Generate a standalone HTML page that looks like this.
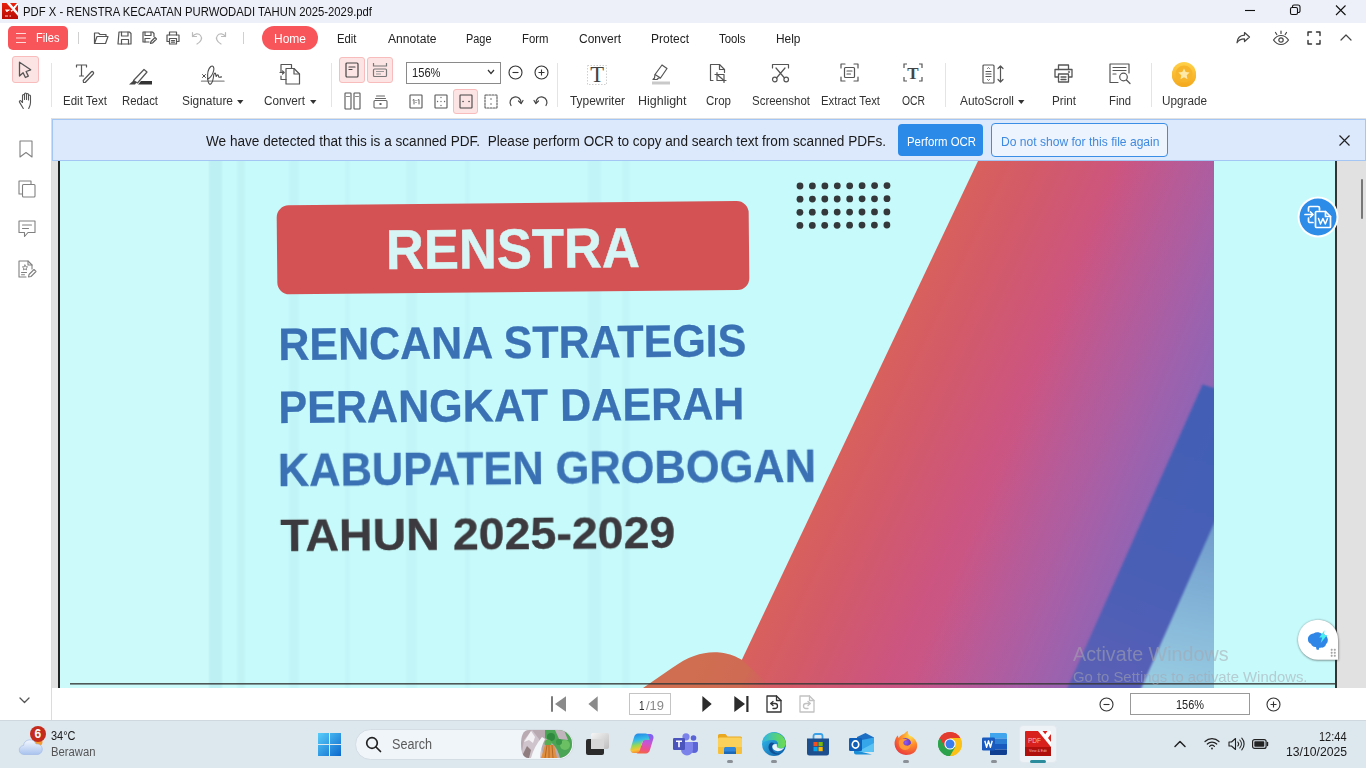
<!DOCTYPE html>
<html lang="en"><head>
<meta charset="utf-8">
<title>PDF X - RENSTRA KECAATAN PURWODADI TAHUN 2025-2029.pdf</title>
<style>
*{box-sizing:border-box;margin:0;padding:0}
html,body{width:1366px;height:768px;overflow:hidden;background:#fff}
body{font-family:"Liberation Sans",sans-serif;font-size:12px;color:#222;position:relative}
.a{position:absolute}
.t{position:absolute;white-space:nowrap;line-height:1;display:block}
svg{position:absolute;overflow:visible}
.ic{stroke:#555;fill:none;stroke-width:1.2;stroke-linecap:round;stroke-linejoin:round}
/* regions */
#titlebar{left:0;top:0;width:1366px;height:23px;background:#eef0f9}
#menubar{left:0;top:23px;width:1366px;height:33px;background:#fff}
#toolbar{left:0;top:56px;width:1366px;height:62px;background:#fff}
#sidebar{left:0;top:118px;width:52px;height:602px;background:#fff;border-right:1px solid #dcdcdc}
#docarea{left:52px;top:118px;width:1314px;height:570px;background:#e1e1e1;overflow:hidden}
#notice{left:52px;top:119px;width:1314px;height:42px;background:#dce8fb;border:1px solid #a3c6f5}
#bottombar{left:52px;top:688px;width:1314px;height:32px;background:#fff}
#taskbar{left:0;top:720px;width:1366px;height:48px;background:#dde7ee;border-top:1px solid #cfd8de}
.sep{position:absolute;width:1px;background:#e4e4e4}
.lbl{font-size:12px;color:#333}
.menu{font-size:12.500px;color:#222}
</style>
</head>
<body>
<div id="titlebar" class="a"></div>
<div id="menubar" class="a"></div>
<div id="toolbar" class="a"></div>
<div id="sidebar" class="a"></div>
<div id="docarea" class="a"></div>
<div id="notice" class="a"></div>
<div id="bottombar" class="a"></div>
<div id="taskbar" class="a"></div>
<!-- title bar -->
<svg class="a" style="left:2px;top:3px" width="16" height="16" viewBox="0 0 16 16">
  <defs><linearGradient id="pdfx" x1="0" y1="0" x2="0" y2="1"><stop offset="0" stop-color="#e8200c"></stop><stop offset="1" stop-color="#b80a04"></stop></linearGradient></defs>
  <rect width="16" height="16" fill="url(#pdfx)"></rect>
  <path d="M4.500 0h3.500l8 9.500v3.500z" fill="#fff"></path>
  <path d="M15 0h1v1.500l-4.200 5.500 -1.500 -1.800z" fill="#fff"></path>
  <path d="M10 0h4.500l-2.500 3z" fill="#e8200c"></path>
  <path d="M3 6.500h5l-1 1.500h-1l-.500 1h-1zM8.500 7.500l2 -1 .5 1 -1.500 1.500z" fill="#fff" opacity=".92"></path>
  <path d="M3 13h3M7.500 13h1.500" stroke="#fbd0cc" stroke-width="1"></path>
</svg>
<span class="t" style="left: 23px; top: 6px; font-size: 12.5px; color: rgb(17, 17, 17); transform-origin: 0px 0px; transform: scaleX(0.9031);">PDF X - RENSTRA KECAATAN PURWODADI TAHUN 2025-2029.pdf</span>
<svg class="a" style="left:1240px;top:0" width="120" height="22" viewBox="0 0 120 22" fill="none" stroke="#111" stroke-width="1.1">
  <path d="M5 10.5h10"></path>
  <rect x="50.5" y="7.5" width="7" height="7" rx="1.5"></rect>
  <path d="M52.5 7.5v-1a1.5 1.500 0 0 1 1.500 -1.500h4a2 2 0 0 1 2 2v4a1.500 1.500 0 0 1 -1.500 1.500h-1"></path>
  <path d="M96 5.500l9.500 9.500M105.500 5.500l-9.500 9.500"></path>
</svg>

<!-- menu bar -->
<div class="a" style="left:8px;top:26px;width:60px;height:24px;background:#f8555b;border-radius:5px"></div>
<svg class="a" style="left:15px;top:32px" width="12" height="12" viewBox="0 0 12 12" stroke="#ffd9da" stroke-width="1.2"><path d="M1 1.500h10M1 6h10M1 10.500h10"></path></svg>
<span class="t" style="left: 36px; top: 31px; font-size: 13px; color: rgb(255, 255, 255); transform-origin: 0px 0px; transform: scaleX(0.856);">Files</span>
<div class="sep" style="left:78px;top:32px;height:12px;background:#d0d0d0"></div>
<!-- quick icons -->
<svg class="a ic" style="left:93px;top:31px" width="16" height="14" viewBox="0 0 16 14"><path d="M1.500 12.500v-10.500h4l1.500 1.500h6v2"></path><path d="M1.500 12.500l2.500 -7h11l-2.500 7z"></path></svg>
<svg class="a ic" style="left:118px;top:31px" width="14" height="14" viewBox="0 0 14 14"><path d="M1 1h10.500l1.500 1.500v10.500h-13z"></path><path d="M3.500 1v4h6.500v-4M3.500 13v-4.500h7v4.500"></path></svg>
<svg class="a ic" style="left:142px;top:31px" width="15" height="14" viewBox="0 0 15 14"><path d="M7 11h-6v-10h9.500l1.500 1.500v3"></path><path d="M3 1v3.500h6v-3.500M3 11v-3.500h5"></path><path d="M8.500 12.500l.5 -2 4 -4 1.500 1.500 -4 4z"></path></svg>
<svg class="a ic" style="left:166px;top:31px" width="14" height="14" viewBox="0 0 14 14"><path d="M3.500 4v-3h7v3"></path><path d="M3 10.500h-2v-6.500h12v6.500h-2"></path><path d="M3.500 7.500h7v5.500h-7zM5.500 9.500h3M5.500 11.200h3"></path></svg>
<svg class="a ic" style="left:191px;top:31px;stroke:#bbb" width="12" height="14" viewBox="0 0 12 14"><path d="M1.500 1.500v4h4"></path><path d="M1.500 5.500c2 -3 6 -3.500 8 -1s1 6 -3.500 8.500"></path></svg>
<svg class="a ic" style="left:215px;top:31px;stroke:#bbb" width="12" height="14" viewBox="0 0 12 14"><path d="M10.500 1.500v4h-4"></path><path d="M10.500 5.500c-2 -3 -6 -3.500 -8 -1s-1 6 3.500 8.500"></path></svg>
<div class="sep" style="left:243px;top:32px;height:12px;background:#d0d0d0"></div>
<!-- tabs -->
<div class="a" style="left:262px;top:26px;width:56px;height:24px;background:#f8555b;border-radius:12px"></div>
<span class="t menu" style="left: 274px; top: 32.5px; color: rgb(255, 255, 255); transform-origin: 0px 0px; transform: scaleX(0.9597);">Home</span>
<span class="t menu" style="left: 337px; top: 32.5px; transform-origin: 0px 0px; transform: scaleX(0.905);">Edit</span>
<span class="t menu" style="left: 387.5px; top: 32.5px; transform-origin: 0px 0px; transform: scaleX(0.9691);">Annotate</span>
<span class="t menu" style="left: 466px; top: 32.5px; transform-origin: 0px 0px; transform: scaleX(0.8732);">Page</span>
<span class="t menu" style="left: 522px; top: 32.5px; transform-origin: 0px 0px; transform: scaleX(0.9084);">Form</span>
<span class="t menu" style="left: 579px; top: 32.5px; transform-origin: 0px 0px; transform: scaleX(0.9593);">Convert</span>
<span class="t menu" style="left: 651px; top: 32.5px; transform-origin: 0px 0px; transform: scaleX(0.9594);">Protect</span>
<span class="t menu" style="left: 719px; top: 32.5px; transform-origin: 0px 0px; transform: scaleX(0.9079);">Tools</span>
<span class="t menu" style="left: 776px; top: 32.5px; transform-origin: 0px 0px; transform: scaleX(0.9526);">Help</span>
<!-- right icons -->
<svg class="a ic" style="left:1236px;top:31px;stroke:#444" width="15" height="14" viewBox="0 0 15 14"><path d="M8.500 1.500l5 4.500 -5 4.500v-2.700c-3.500 0 -6 1.200 -7.500 4 .3 -4.500 3 -7.300 7.500 -7.600z"></path></svg>
<svg class="a ic" style="left:1272px;top:30px;stroke:#444" width="18" height="16" viewBox="0 0 18 16"><path d="M1.500 10c2 -3 4.500 -4.500 7.500 -4.500s5.500 1.500 7.500 4.500c-2 3 -4.500 4.500 -7.500 4.500s-5.500 -1.500 -7.500 -4.500z"></path><circle cx="9" cy="10" r="2.200"></circle><path d="M9 1v2.500M3.500 2.500l1.300 2M14.500 2.500l-1.300 2"></path></svg>
<svg class="a ic" style="left:1307px;top:31px;stroke:#333;stroke-width:1.400" width="14" height="14" viewBox="0 0 14 14"><path d="M1 4.500v-3.500h3.500M9.500 1h3.500v3.500M13 9.500v3.500h-3.500M4.500 13h-3.500v-3.500"></path></svg>
<svg class="a ic" style="left:1340px;top:34px;stroke:#444" width="12" height="7" viewBox="0 0 12 7"><path d="M1 6l5 -5 5 5"></path></svg>

<!-- toolbar -->
<div class="a" style="left:12px;top:56px;width:27px;height:27px;background:#fde4e4;border:1px solid #f8bcbc;border-radius:3px"></div>
<svg class="a" style="left:0;top:0" width="52" height="118" viewBox="0 0 52 118" fill="none" stroke="#555" stroke-width="1.300" stroke-linejoin="round" stroke-linecap="round"><path d="M19.500 62.200v13.800l3.600 -3.200 2.300 4.700 2.900 -1.400 -2.200 -4.600 4.600 -1.700z"></path>
<path d="M22.500 101v-5.500a1 1 0 0 1 2 0M24.500 99.500v-5.500a1 1 0 0 1 2 0v5.500M26.500 94.500a1 1 0 0 1 2 0v5.500M28.500 96a1 1 0 0 1 2 0v6.500c0 2.500 -1 4 -1.800 6M22.500 97.500v5l-1.600 -1.600c-.8 -.8 -2 .2 -1.400 1.200l3.800 6.400" stroke-width="1.100"></path></svg>
<div class="sep" style="left:51px;top:63px;height:44px"></div>
<!-- Edit Text -->
<svg class="a ic" style="left:75px;top:63px;stroke-width:1.200" width="20" height="21" viewBox="0 0 20 21"><path d="M1.500 4v-2h10v2M6.500 2v11M4.500 13h4"></path><path d="M8.500 19.500l-.3 -2 8 -8.500a1.300 1.300 0 0 1 2 2l-8 8.500z"></path></svg>
<span class="t lbl" style="left: 62.5px; top: 95px; transform-origin: 0px 0px; transform: scaleX(0.9604);">Edit Text</span>
<!-- Redact -->
<svg class="a" style="left:128px;top:68px" width="25" height="17" viewBox="0 0 25 17" fill="none" stroke="#555" stroke-width="1.200" stroke-linejoin="round"><path d="M5.500 12.500l10.500 -11 3 2.500 -9.500 11z"></path><path d="M1 16.500l4.500 -4 3 2 -1.500 2z" fill="#444" stroke="none"></path><path d="M10 16.500l3 -3.500h11v3.500z" fill="#333" stroke="none"></path></svg>
<span class="t lbl" style="left: 122px; top: 95px; transform-origin: 0px 0px; transform: scaleX(0.9466);">Redact</span>
<!-- Signature -->
<svg class="a ic" style="left:0;top:0;stroke-width:1.100;stroke:#4a4a4a" width="240" height="118" viewBox="0 0 240 118"><path d="M201.500 81.200h22.500" stroke="#8a8a8a" stroke-width="1.300"></path><path d="M202.500 74.500l3 3M205.500 74.500l-3 3" stroke-width="1"></path><path d="M207.500 79.500c2.500 -1.500 5.500 -5.500 6.300 -9.500c.5 -3 -1 -5 -3 -3.500c-2.500 2 -3.500 8 -3 13c.3 3 1.500 5.500 3 4.500c1.500 -1 2.500 -5 3 -9.500c1 -2 1.500 -1.500 1.800 -.500l.600 2.500c.5 -1 1.200 -2 1.800 -1.500c.6 .5 .4 2 1 2.200s1.500 -.300 2.500 -.300"></path></svg>
<span class="t lbl" style="left: 182px; top: 95px; transform-origin: 0px 0px; transform: scaleX(0.9927);">Signature</span>
<svg class="a" style="left:237px;top:99.500px" width="6.500" height="4" viewBox="0 0 8 5"><path d="M0 0h8l-4 5z" fill="#333"></path></svg>
<!-- Convert -->
<svg class="a ic" style="left:279px;top:63px;stroke-width:1.200" width="22" height="22" viewBox="0 0 22 22"><path d="M2 9v-7.500h10.500v3.500"></path><path d="M7 5.500h8l5.500 5.500v10h-13.500z" fill="#fff"></path><path d="M15 5.500v5.500h5.500"></path><path d="M2 13v3.500h5"></path><path d="M1 9.500h4M3.500 8l1.700 1.500 -1.700 1.500"></path></svg>
<span class="t lbl" style="left: 264px; top: 95px; transform-origin: 0px 0px; transform: scaleX(0.9755);">Convert</span>
<svg class="a" style="left:309.500px;top:99.500px" width="6.500" height="4" viewBox="0 0 8 5"><path d="M0 0h8l-4 5z" fill="#333"></path></svg>
<div class="sep" style="left:331px;top:63px;height:44px"></div>
<!-- view mode buttons -->
<div class="a" style="left:339px;top:57px;width:26px;height:26px;background:#fde4e4;border:1px solid #f8bcbc;border-radius:3px"></div>
<div class="a" style="left:367px;top:57px;width:26px;height:26px;background:#fde4e4;border:1px solid #f8bcbc;border-radius:3px"></div>
<svg class="a ic" style="left:345px;top:62px;stroke:#444;stroke-width:1.200" width="14" height="16" viewBox="0 0 14 16"><rect x="1" y="1" width="12" height="14" rx="1"></rect><path d="M4 5h6M4 7.500h3"></path></svg>
<svg class="a" style="left:372px;top:62px" width="16" height="16" viewBox="0 0 16 16" fill="none" stroke="#777" stroke-width="1.200"><path d="M1.500 1v3h13v-3"></path><rect x="1.500" y="7" width="13" height="7.500" rx="1"></rect><path d="M4 9.500h8M4 12h5" stroke="#999"></path></svg>
<svg class="a ic" style="left:344px;top:92px;stroke:#555;stroke-width:1.100" width="17" height="18" viewBox="0 0 17 18"><rect x="1" y="1" width="6" height="16" rx=".5"></rect><rect x="10" y="1" width="6" height="16" rx=".5"></rect><path d="M2.500 4.500h3M11.500 4.500h3" stroke="#888"></path></svg>
<svg class="a ic" style="left:373px;top:94px;stroke:#666;stroke-width:1.100" width="15" height="15" viewBox="0 0 15 15"><path d="M3.500 2h8M2.500 4.500h10"></path><rect x="1" y="6.500" width="13" height="7.500" rx="1"></rect><rect x="6.500" y="9" width="2" height="2" fill="#666" stroke="none"></rect></svg>
<!-- zoom combo -->
<div class="a" style="left:406px;top:62px;width:95px;height:22px;background:#fff;border:1px solid #8a8a8a"></div>
<span class="t" style="left: 411.5px; top: 66px; font-size: 13px; color: rgb(34, 34, 34); transform-origin: 0px 0px; transform: scaleX(0.8571);">156%</span>
<svg class="a" style="left:487px;top:69px" width="8" height="6" viewBox="0 0 8 6" fill="none" stroke="#333" stroke-width="1.200"><path d="M1 1l3 3.500 3 -3.500"></path></svg>
<svg class="a" style="left:508px;top:65px" width="15" height="15" viewBox="0 0 15 15" fill="none" stroke="#333" stroke-width="1.100"><circle cx="7.500" cy="7.500" r="6.500"></circle><path d="M4.500 7.500h6"></path></svg>
<svg class="a" style="left:533.500px;top:65px" width="15" height="15" viewBox="0 0 15 15" fill="none" stroke="#333" stroke-width="1.100"><circle cx="7.500" cy="7.500" r="6.500"></circle><path d="M4.500 7.500h6M7.500 4.500v6"></path></svg>
<!-- fit row -->
<svg class="a ic" style="left:409px;top:94px;stroke:#555;stroke-width:1.100" width="14" height="15" viewBox="0 0 14 15"><rect x="1" y="1" width="12" height="13" rx=".5"></rect><path d="M4 6l1 -.500v4.500M9 6l1 -.500v4.500" stroke-width=".9"></path><path d="M7 6.500v.1M7 8.500v.1" stroke-width="1"></path></svg>
<svg class="a ic" style="left:434px;top:94px;stroke:#555;stroke-width:1.100" width="14" height="15" viewBox="0 0 14 15"><rect x="1" y="1" width="12" height="13" rx=".5"></rect><path d="M7 3.500v.1M7 11.500v.1M3.500 7.500h.1M10.500 7.500h.1M7 7.500v.1" stroke-width="1.300" stroke="#666"></path></svg>
<div class="a" style="left:453px;top:89px;width:25px;height:25px;background:#fde4e4;border:1px solid #f8bcbc;border-radius:3px"></div>
<svg class="a ic" style="left:459px;top:94px;stroke:#444;stroke-width:1.100" width="14" height="15" viewBox="0 0 14 15"><rect x="1" y="1" width="12" height="13" rx=".5"></rect><path d="M4 7.500h.1M10 7.500h.1" stroke-width="1.500"></path></svg>
<svg class="a ic" style="left:484px;top:94px;stroke:#555;stroke-width:1.100" width="14" height="15" viewBox="0 0 14 15"><rect x="1" y="1" width="12" height="13" rx=".5" stroke-dasharray="2 1.200"></rect><path d="M7 5v.1M7 10v.1" stroke-width="1.500"></path></svg>
<svg class="a ic" style="left:508px;top:94px;stroke:#444;stroke-width:1.200" width="16" height="15" viewBox="0 0 16 15"><path d="M3 11.500a5.500 5.500 0 1 1 10 -2.500"></path><path d="M10.500 7l2.700 2.500 1.800 -3"></path></svg>
<svg class="a ic" style="left:533px;top:94px;stroke:#444;stroke-width:1.200" width="16" height="15" viewBox="0 0 16 15"><path d="M13 11.500a5.500 5.500 0 1 0 -10 -2.500"></path><path d="M5.500 7l-2.700 2.500 -1.800 -3"></path></svg>
<div class="sep" style="left:557px;top:63px;height:44px"></div>
<!-- Typewriter -->
<svg class="a" style="left:587px;top:65px" width="20" height="20" viewBox="0 0 20 20"><rect x=".500" y=".500" width="19" height="19" fill="none" stroke="#cfcfcf" stroke-width="1" stroke-dasharray="1.500 1.500"></rect><text x="10" y="17" text-anchor="middle" font-family="Liberation Serif,serif" font-size="22.500" fill="#444">T</text></svg>
<span class="t lbl" style="left: 570px; top: 95px; transform-origin: 0px 0px; transform: scaleX(0.9935);">Typewriter</span>
<!-- Highlight -->
<svg class="a" style="left:651px;top:63px" width="20" height="22" viewBox="0 0 20 22" fill="none" stroke="#555" stroke-width="1.200" stroke-linejoin="round"><path d="M4 11.500l7 -9.500 5 3.500 -6.500 9.500z"></path><path d="M4 11.500l-.5 3.500 -1.500 1.500h4l1.500 -1.500h2"></path><path d="M1 20h18" stroke="#c9c9c9" stroke-width="3"></path></svg>
<span class="t lbl" style="left: 637.5px; top: 95px; transform-origin: 0px 0px; transform: scaleX(1.0385);">Highlight</span>
<!-- Crop -->
<svg class="a ic" style="left:709px;top:63px;stroke-width:1.200" width="20" height="20" viewBox="0 0 20 20"><path d="M4 17.500h-2.500v-16h9l5 5v3"></path><path d="M10.500 1.500v5h5"></path><path d="M8 9.500v8h9M6 11.500h9v8"></path><path d="M8 11.500l7 6"></path></svg>
<span class="t lbl" style="left: 706px; top: 95px; transform-origin: 0px 0px; transform: scaleX(0.961);">Crop</span>
<!-- Screenshot -->
<svg class="a ic" style="left:771px;top:63px;stroke-width:1.200" width="19" height="20" viewBox="0 0 19 20"><path d="M1.500 5v-3.500h16v3.500"></path><path d="M5 5l8.500 10M14 5l-8.500 10"></path><circle cx="3.800" cy="16.500" r="2.300"></circle><circle cx="15.200" cy="16.500" r="2.300"></circle></svg>
<span class="t lbl" style="left: 752px; top: 95px; transform-origin: 0px 0px; transform: scaleX(0.9555);">Screenshot</span>
<!-- Extract Text -->
<svg class="a ic" style="left:840px;top:63px;stroke-width:1.200" width="19" height="19" viewBox="0 0 19 19"><path d="M1 5v-4h4M14 1h4v4M18 14v4h-4M5 18h-4v-4"></path><rect x="4.500" y="4.500" width="10" height="10" rx="1"></rect><path d="M7 8h5M7 11h3.500"></path></svg>
<span class="t lbl" style="left: 820.5px; top: 95px; transform-origin: 0px 0px; transform: scaleX(0.9445);">Extract Text</span>
<!-- OCR -->
<svg class="a" style="left:903px;top:63px" width="20" height="19" viewBox="0 0 20 19"><path d="M1 5v-4h3M16 1h3v4M19 14v4h-3M4 18h-3v-4" fill="none" stroke="#555" stroke-width="1.200"></path><text x="10" y="15.500" text-anchor="middle" font-family="Liberation Serif,serif" font-weight="bold" font-size="17" fill="#444">T</text></svg>
<span class="t lbl" style="left: 901.5px; top: 95px; transform-origin: 0px 0px; transform: scaleX(0.8623);">OCR</span>
<div class="sep" style="left:945px;top:63px;height:44px"></div>
<!-- AutoScroll -->
<svg class="a ic" style="left:982px;top:64px;stroke-width:1.200" width="23" height="20" viewBox="0 0 23 20"><rect x="1" y="1" width="11" height="18" rx="1"></rect><path d="M4 7.500h5M4 10h5M4 12.500h5"></path><path d="M5.500 4.500l1 -1 1 1M5.500 15.500l1 1 1 -1" stroke-width=".9"></path><path d="M18.500 2v16M16 4.500l2.500 -2.500 2.500 2.500M16 15.500l2.500 2.500 2.500 -2.500"></path></svg>
<span class="t lbl" style="left: 960px; top: 95px; transform-origin: 0px 0px; transform: scaleX(0.9871);">AutoScroll</span>
<svg class="a" style="left:1018px;top:99.500px" width="6.500" height="4" viewBox="0 0 8 5"><path d="M0 0h8l-4 5z" fill="#333"></path></svg>
<!-- Print -->
<svg class="a ic" style="left:1054px;top:64px;stroke-width:1.300" width="19" height="19" viewBox="0 0 19 19"><path d="M4.500 5.500v-4.500h10v4.500"></path><path d="M4.500 13h-3.500v-7.500h17v7.500h-3.500"></path><path d="M4.500 10h10v8h-10z"></path><path d="M7 13h5M7 15.500h5"></path><path d="M14.500 8h1"></path></svg>
<span class="t lbl" style="left: 1051.5px; top: 95px; transform-origin: 0px 0px; transform: scaleX(0.9722);">Print</span>
<!-- Find -->
<svg class="a ic" style="left:1109px;top:63px;stroke-width:1.200" width="22" height="21" viewBox="0 0 22 21"><path d="M9 19.500h-8v-18.500h19v9"></path><path d="M4 4.500h13M4 7.500h13M4 11h3"></path><circle cx="14.500" cy="14" r="3.800"></circle><path d="M17.500 17l3.500 3.500"></path></svg>
<span class="t lbl" style="left: 1108.5px; top: 95px; transform-origin: 0px 0px; transform: scaleX(0.9424);">Find</span>
<div class="sep" style="left:1151px;top:63px;height:44px"></div>
<!-- Upgrade -->
<svg class="a" style="left:1172px;top:62px" width="24" height="25" viewBox="0 0 24 25">
  <defs><linearGradient id="coin" x1="0" y1="0" x2="0" y2="1"><stop offset="0" stop-color="#ffd24a"></stop><stop offset="1" stop-color="#f5a81c"></stop></linearGradient></defs>
  <ellipse cx="12" cy="13.500" rx="12" ry="11.500" fill="#f0b028"></ellipse>
  <circle cx="12" cy="12" r="12" fill="url(#coin)"></circle>
  <circle cx="12" cy="12" r="8.500" fill="#f7b52c"></circle>
  <path d="M12 6.500l1.700 3.600 3.900 .5 -2.900 2.700 .8 3.900 -3.500 -2 -3.500 2 .8 -3.900 -2.900 -2.700 3.900 -.5z" fill="#ffe9a8"></path>
</svg>
<span class="t lbl" style="left: 1162px; top: 95px; transform-origin: 0px 0px; transform: scaleX(0.9776);">Upgrade</span>

<!-- sidebar icons -->
<svg class="a ic" style="left:19px;top:140px;stroke:#808080;stroke-width:1.100" width="14" height="18" viewBox="0 0 14 18"><path d="M1 1h12v16l-6 -4.500 -6 4.500z"></path></svg>
<svg class="a ic" style="left:18px;top:180px;stroke:#808080;stroke-width:1.100" width="18" height="18" viewBox="0 0 18 18"><path d="M4.500 14h-3.500v-13h12v3.500"></path><rect x="4.500" y="4.500" width="12.500" height="12.500" rx="1"></rect></svg>
<svg class="a ic" style="left:18px;top:220px;stroke:#808080;stroke-width:1.100" width="18" height="18" viewBox="0 0 18 18"><path d="M1 1h16v11.500h-7l-3.500 4v-4h-5.500z"></path><path d="M4.500 5h9M4.500 8.500h6"></path></svg>
<svg class="a ic" style="left:18px;top:260px;stroke:#808080;stroke-width:1.100" width="19" height="18" viewBox="0 0 19 18"><path d="M8 17h-7v-16h9l4 4v4"></path><path d="M10 1v4h4"></path><path d="M7 5l.8 1.700 1.800 .2 -1.300 1.200 .3 1.800 -1.600 -.9 -1.600 .9 .3 -1.800 -1.300 -1.200 1.800 -.2z" stroke-width=".9"></path><path d="M3.500 12.500h5M3.500 14.800h3"></path><path d="M10.500 17l.5 -2.500 5 -5 2 2 -5 5z"></path></svg>
<svg class="a ic" style="left:19px;top:697px;stroke:#555;stroke-width:1.300" width="11" height="7" viewBox="0 0 11 7"><path d="M1 1l4.500 4.500 4.500 -4.500"></path></svg>

<!-- document page -->
<div class="a" id="page" style="left:58px;top:161px;width:1279px;height:527px;overflow:hidden;background:#c7fafb">
<svg style="left:0;top:0" width="1279" height="527" viewBox="58 161 1279 527">
  <defs>
    <linearGradient id="gmain" gradientUnits="userSpaceOnUse" x1="978" y1="161" x2="1223" y2="277">
      <stop offset="0" stop-color="#d8605c"></stop>
      <stop offset=".23" stop-color="#d25a6a"></stop>
      <stop offset=".5" stop-color="#cc5580"></stop>
      <stop offset=".8" stop-color="#c45890"></stop>
      <stop offset="1" stop-color="#c05a98"></stop>
    </linearGradient>
    <linearGradient id="gpurp" gradientUnits="userSpaceOnUse" x1="1000" y1="161" x2="1344.800" y2="298.900">
      <stop offset=".3" stop-color="#9064b6" stop-opacity="0"></stop>
      <stop offset=".535" stop-color="#8e65b6" stop-opacity=".42"></stop>
      <stop offset=".725" stop-color="#8a66b8" stop-opacity=".85"></stop>
      <stop offset="1" stop-color="#7c68bc" stop-opacity="1"></stop>
    </linearGradient>
    <linearGradient id="gblue" gradientUnits="userSpaceOnUse" x1="1200" y1="390" x2="1080" y2="688">
      <stop offset="0" stop-color="#3f5eb6"></stop>
      <stop offset=".6" stop-color="#475fb6"></stop>
      <stop offset="1" stop-color="#5a60b6"></stop>
    </linearGradient>
    <linearGradient id="glight" gradientUnits="userSpaceOnUse" x1="1214" y1="524" x2="1180" y2="688">
      <stop offset="0" stop-color="#6f9bcc"></stop>
      <stop offset="1" stop-color="#98cce2"></stop>
    </linearGradient>
    <clipPath id="cmain"><polygon points="978,161 1214,161 1214,688 728.500,688"></polygon></clipPath>
    <filter id="soft" x="-10%" y="-10%" width="120%" height="120%"><feGaussianBlur stdDeviation="1.300"></feGaussianBlur></filter>
    <linearGradient id="gorange" gradientUnits="userSpaceOnUse" x1="700" y1="660" x2="775" y2="690">
      <stop offset="0" stop-color="#cf6e50"></stop>
      <stop offset=".6" stop-color="#cf6a54"></stop>
      <stop offset="1" stop-color="#cc6060" stop-opacity="0"></stop>
    </linearGradient>
  </defs>
  <rect x="58" y="161" width="1279" height="527" fill="#c7fafb"></rect>
  <!-- faint scan streaks -->
  <g fill="#9fd6dc" filter="url(#soft)"><rect x="209" y="150" width="13" height="550" opacity="0.26"></rect><rect x="237" y="150" width="8" height="550" opacity="0.16"></rect><rect x="289" y="150" width="10" height="550" opacity="0.14"></rect><rect x="345" y="150" width="5" height="550" opacity="0.12"></rect><rect x="406" y="150" width="11" height="550" opacity="0.12"></rect><rect x="465" y="150" width="5" height="550" opacity="0.12"></rect><rect x="588" y="150" width="13" height="550" opacity="0.14"></rect><rect x="622" y="150" width="8" height="550" opacity="0.12"></rect></g>
  <rect x="60" y="161" width="149" height="527" fill="#fff" opacity=".1"></rect>
  <!-- main gradient shape -->
  <polygon points="978,161 1214,161 1214,688 728.500,688" fill="url(#gmain)"></polygon>
  <polygon points="978,161 1214,161 1214,688 728.500,688" fill="url(#gpurp)"></polygon>
  <!-- blue shapes -->
  <g clip-path="url(#cmain)">
  <polygon points="1202.500,384.500 1220,390 1220,524 1141.500,700 1062,700" fill="url(#gblue)" opacity=".96" filter="url(#soft)"></polygon>
  <polygon points="1220,510 1220,700 1136,700" fill="url(#glight)" filter="url(#soft)"></polygon>
  </g>
  <!-- orange hump -->
  <path d="M643,688 L672,668 C690,655 705,651 720,652.500 C730,653.500 737,657 742,660 L772,688 Z" fill="url(#gorange)"></path>
  <!-- red label -->
  <g transform="rotate(-0.550 513 247.700)">
    <rect x="277" y="203.200" width="472" height="89" rx="12" fill="#d45254"></rect>
  </g>
  <g font-family="Liberation Sans, sans-serif" font-weight="bold">
    <text transform="rotate(-0.450 389 269)" x="386" y="269" font-size="56" fill="#d7f5f5" stroke="#d7f5f5" stroke-width=".5" textLength="254" lengthAdjust="spacingAndGlyphs">RENSTRA</text>
    <text transform="rotate(-0.460 281 360)" x="278.500" y="360" font-size="45.500" fill="#3a70b4" stroke="#3a70b4" stroke-width=".3" textLength="468" lengthAdjust="spacingAndGlyphs">RENCANA STRATEGIS</text>
    <text transform="rotate(-0.460 281 423)" x="278.500" y="423" font-size="45.500" fill="#3a70b4" stroke="#3a70b4" stroke-width=".3" textLength="466" lengthAdjust="spacingAndGlyphs">PERANGKAT DAERAH</text>
    <text transform="rotate(-0.460 281 485.500)" x="278" y="485.500" font-size="45.500" fill="#3a70b4" stroke="#3a70b4" stroke-width=".3" textLength="538" lengthAdjust="spacingAndGlyphs">KABUPATEN GROBOGAN</text>
    <text transform="rotate(-0.460 281 551.200)" x="280.500" y="551.200" font-size="43.800" fill="#3c3a3e" stroke="#3c3a3e" stroke-width=".3" textLength="395" lengthAdjust="spacingAndGlyphs">TAHUN 2025-2029</text>
  </g>
  <!-- dots -->
  <g fill="#34383a"><circle cx="800.0" cy="186.0" r="3.4"></circle><circle cx="812.4" cy="185.9" r="3.4"></circle><circle cx="824.9" cy="185.9" r="3.4"></circle><circle cx="837.3" cy="185.8" r="3.4"></circle><circle cx="849.7" cy="185.8" r="3.4"></circle><circle cx="862.1" cy="185.7" r="3.4"></circle><circle cx="874.6" cy="185.6" r="3.4"></circle><circle cx="887.0" cy="185.6" r="3.4"></circle><circle cx="800.0" cy="199.2" r="3.4"></circle><circle cx="812.4" cy="199.1" r="3.4"></circle><circle cx="824.8" cy="199.0" r="3.4"></circle><circle cx="837.2" cy="199.0" r="3.4"></circle><circle cx="849.7" cy="198.9" r="3.4"></circle><circle cx="862.1" cy="198.8" r="3.4"></circle><circle cx="874.5" cy="198.8" r="3.4"></circle><circle cx="887.0" cy="198.7" r="3.4"></circle><circle cx="799.9" cy="212.3" r="3.4"></circle><circle cx="812.3" cy="212.2" r="3.4"></circle><circle cx="824.8" cy="212.2" r="3.4"></circle><circle cx="837.2" cy="212.1" r="3.4"></circle><circle cx="849.6" cy="212.1" r="3.4"></circle><circle cx="862.0" cy="212.0" r="3.4"></circle><circle cx="874.5" cy="211.9" r="3.4"></circle><circle cx="886.9" cy="211.9" r="3.4"></circle><circle cx="799.9" cy="225.4" r="3.4"></circle><circle cx="812.3" cy="225.4" r="3.4"></circle><circle cx="824.7" cy="225.3" r="3.4"></circle><circle cx="837.1" cy="225.3" r="3.4"></circle><circle cx="849.6" cy="225.2" r="3.4"></circle><circle cx="862.0" cy="225.1" r="3.4"></circle><circle cx="874.4" cy="225.1" r="3.4"></circle><circle cx="886.9" cy="225.0" r="3.4"></circle></g>
  <!-- bottom dark line -->
  <rect x="70" y="683" width="1267" height="1.600" fill="#3a3a3a" opacity=".85"></rect>
</svg>
</div>
<div class="a" style="left:58px;top:161px;width:2px;height:527px;background:#222"></div>
<div class="a" style="left:1335px;top:161px;width:2px;height:527px;background:#333"></div>
<!-- scrollbar thumb -->
<div class="a" style="left:1361px;top:179px;width:2px;height:40px;background:#777;border-radius:1px"></div>
<!-- floating convert button -->
<svg class="a" style="left:1297px;top:196px" width="42" height="42" viewBox="0 0 42 42">
  <circle cx="21" cy="21" r="20.500" fill="#fff"></circle>
  <circle cx="21" cy="21" r="18.500" fill="#2d8ce8"></circle>
  <g fill="none" stroke="#fff" stroke-width="1.700" stroke-linejoin="round" stroke-linecap="round">
    <path d="M11.500 15v-3a1.500 1.500 0 0 1 1.500 -1.500h8a1.500 1.500 0 0 1 1.500 1.500v2"></path>
    <path d="M11.500 22v3a1.500 1.500 0 0 0 1.500 1.500h3"></path>
    <path d="M8 18.500h8M13.500 16l2.500 2.500 -2.500 2.500"></path>
    <path d="M19.500 15.500h9l5 5v10a1 1 0 0 1 -1 1h-13a1 1 0 0 1 -1 -1v-14a1 1 0 0 1 1 -1z" fill="#2d8ce8"></path>
    <path d="M28.500 15.500v5h5"></path>
    <path d="M21.500 22.500l2 5.500 2.400 -5.500 2.400 5.500 2.200 -5.500" stroke-width="1.500"></path>
  </g>
</svg>
<!-- floating AI button -->
<svg class="a" style="left:1290px;top:612px" width="56" height="56" viewBox="1290 612 56 56">
  <defs><filter id="sh" x="-20%" y="-20%" width="140%" height="140%"><feGaussianBlur stdDeviation=".9"></feGaussianBlur></filter></defs>
  <path d="M1318 619.700a20 20 0 0 1 20 20v20h-20a20 20 0 0 1 0 -40z" fill="#333" opacity=".75" filter="url(#sh)" transform="translate(.3 .5)"></path>
  <path d="M1318 619.700a20 20 0 0 1 20 20v20h-20a20 20 0 0 1 0 -40z" fill="#fff"></path>
  <path d="M1308 640c-.5 -3.500 2 -6 5.500 -6.500c2.500 -1.800 6 -1.500 8 .3c3 0 5.500 2 6 4.500c.8 2 .2 4.500 -1.500 5.800c-.3 2.200 -2.300 3.800 -4.500 3.500c-1 .3 -1.700 0 -2.300 .3l-.7 2 -2 -.5 -.5 -2.500c-2.500 .3 -4.500 -1.200 -5 -3.200c-1.800 -.5 -3 -2 -3 -3.700z" fill="#2f86e6"></path>
  <path d="M1324.500 630.200l-5.300 7.300h3l-1.500 5.500 6.500 -8h-3.200z" fill="#45eef0"></path>
  <g stroke="#8a8a8a" stroke-width=".7"><path d="M1330.600 649.800h2.200M1331.700 648.700v2.200M1333.700 649.800h2.200M1334.800 648.700v2.200M1330.600 652.800h2.200M1331.700 651.700v2.200M1333.700 652.800h2.200M1334.800 651.700v2.200M1330.600 655.800h2.200M1331.700 654.700v2.200M1333.700 655.800h2.200M1334.800 654.700v2.200"></path></g>
</svg>
<!-- watermark -->
<span class="t" style="left: 1073px; top: 644px; font-size: 20px; color: rgba(165, 165, 175, 0.55); transform-origin: 0px 0px; transform: scaleX(0.9852);">Activate Windows</span>
<span class="t" style="left: 1073px; top: 670px; font-size: 14.5px; color: rgba(165, 165, 175, 0.55); transform-origin: 0px 0px; transform: scaleX(1.0245);">Go to Settings to activate Windows.</span>

<!-- notice bar content -->
<span class="t" style="left: 206px; top: 134px; font-size: 14px; color: rgb(26, 26, 26); white-space: pre; transform-origin: 0px 0px; transform: scaleX(0.9713);">We have detected that this is a scanned PDF.  Please perform OCR to copy and search text from scanned PDFs.</span>
<div class="a" style="left:898px;top:124px;width:85px;height:32px;background:#2b8ae8;border-radius:4px"></div>
<span class="t" style="left: 906.5px; top: 134.5px; font-size: 13px; color: rgb(255, 255, 255); transform-origin: 0px 0px; transform: scaleX(0.8764);">Perform OCR</span>
<div class="a" style="left:991px;top:123px;width:177px;height:34px;background:#eef4fd;border:1.500px solid #3a8ee6;border-radius:4px"></div>
<span class="t" style="left: 1000.5px; top: 134.5px; font-size: 13px; color: rgb(63, 138, 224); transform-origin: 0px 0px; transform: scaleX(0.9294);">Do not show for this file again</span>
<svg class="a" style="left:1339px;top:135px" width="11" height="11" viewBox="0 0 11 11" stroke="#222" stroke-width="1.200"><path d="M.500 .500l10 10M10.500 .500l-10 10"></path></svg>

<!-- bottom nav -->
<svg class="a" style="left:550px;top:695px" width="17" height="18" viewBox="0 0 17 18"><path d="M2 1.200v15.600" stroke="#7a7a7a" stroke-width="2"></path><path d="M16 1.200l-11 7.800 11 7.800z" fill="#8a8a8a"></path></svg>
<svg class="a" style="left:588px;top:695px" width="10" height="18" viewBox="0 0 10 18"><path d="M9.700 1.200l-9.300 7.800 9.300 7.800z" fill="#8a8a8a"></path></svg>
<div class="a" style="left:629px;top:693px;width:42px;height:22px;background:#fff;border:1px solid #c4c4c4"></div>
<span class="t" style="left: 638.5px; top: 699px; font-size: 13px; color: rgb(42, 42, 42); transform-origin: 0px 0px; transform: scaleX(0.7603);">1</span>
<span class="t" style="left: 646px; top: 699px; font-size: 13px; color: rgb(138, 138, 138); transform-origin: 0px 0px; transform: scaleX(0.9957);">/19</span>
<svg class="a" style="left:702px;top:695px" width="10" height="18" viewBox="0 0 10 18"><path d="M.400 1l9.300 8 -9.300 8z" fill="#2c2c2c"></path></svg>
<svg class="a" style="left:734px;top:695px" width="15" height="18" viewBox="0 0 15 18"><path d="M13.400 1v16" stroke="#2c2c2c" stroke-width="2.200"></path><path d="M.300 1l10.700 8 -10.700 8z" fill="#2c2c2c"></path></svg>
<svg class="a ic" style="left:766px;top:695px;stroke:#333;stroke-width:1.300" width="16" height="18" viewBox="0 0 16 18"><path d="M1 1h9.500l4.500 4.500v11.500h-14z"></path><path d="M10.500 1v4.500h4.500"></path><path d="M5 8.500h4a2.500 2.500 0 0 1 0 5h-2"></path><path d="M7 6.500l-2.200 2 2.200 2"></path></svg>
<svg class="a ic" style="left:799px;top:695px;stroke:#c2c2c2;stroke-width:1.300" width="16" height="18" viewBox="0 0 16 18"><path d="M1 1h9.500l4.500 4.500v11.500h-14z"></path><path d="M10.500 1v4.500h4.500"></path><path d="M11 8.500h-4a2.500 2.500 0 0 0 0 5h2"></path><path d="M9 6.500l2.200 2 -2.200 2"></path></svg>
<svg class="a" style="left:1098.500px;top:696.500px" width="15" height="15" viewBox="0 0 15 15" fill="none" stroke="#333" stroke-width="1.100"><circle cx="7.500" cy="7.500" r="6.500"></circle><path d="M4.500 7.500h6"></path></svg>
<div class="a" style="left:1130px;top:693px;width:120px;height:22px;background:#fff;border:1px solid #999"></div>
<span class="t" style="left: 1176px; top: 698px; font-size: 13px; color: rgb(34, 34, 34); transform-origin: 0px 0px; transform: scaleX(0.8421);">156%</span>
<svg class="a" style="left:1266px;top:696.500px" width="15" height="15" viewBox="0 0 15 15" fill="none" stroke="#333" stroke-width="1.100"><circle cx="7.500" cy="7.500" r="6.500"></circle><path d="M4.500 7.500h6M7.500 4.500v6"></path></svg>

<!-- taskbar -->
<svg class="a" style="left:18px;top:736px" width="28" height="20" viewBox="0 0 28 20">
  <defs><linearGradient id="cl" x1="0" y1="0" x2="0" y2="1"><stop offset="0" stop-color="#f4f8ff"></stop><stop offset="1" stop-color="#a9c3ee"></stop></linearGradient></defs>
  <circle cx="20" cy="6" r="4.500" fill="#f59b2e"></circle>
  <path d="M6 18.500a4.500 4.500 0 0 1 -.5 -9a6.500 6.500 0 0 1 12.500 -1.500a5.300 5.300 0 0 1 2 10.500z" fill="url(#cl)" stroke="#9db6e4" stroke-width=".6"></path>
</svg>
<div class="a" style="left:30px;top:726px;width:16px;height:16px;border-radius:8px;background:#c42b1c"></div>
<span class="t" style="left:34.500px;top:728px;font-size:12px;color:#fff;font-weight:bold">6</span>
<span class="t" style="left: 50.5px; top: 730px; font-size: 12px; color: rgb(26, 26, 26); transform-origin: 0px 0px; transform: scaleX(0.9138);">34°C</span>
<span class="t" style="left: 50.5px; top: 746px; font-size: 12px; color: rgb(85, 85, 85); transform-origin: 0px 0px; transform: scaleX(0.9393);">Berawan</span>
<!-- windows logo -->
<svg class="a" style="left:318px;top:733px" width="23" height="23" viewBox="0 0 23 23">
  <defs><linearGradient id="win" x1="0" y1="0" x2="1" y2="1"><stop offset="0" stop-color="#58cdfa"></stop><stop offset="1" stop-color="#0c68cc"></stop></linearGradient></defs>
  <path d="M0 0h11v11h-11zM12 0h11v11h-11zM0 12h11v11h-11zM12 12h11v11h-11z" fill="url(#win)"></path>
</svg>
<!-- search -->
<div class="a" style="left:354.500px;top:728.500px;width:219px;height:31px;border-radius:15.500px;background:#f0f5f9;border:1px solid #d3dde3"></div>
<svg class="a" style="left:365px;top:736px" width="17" height="17" viewBox="0 0 17 17" fill="none" stroke="#222" stroke-width="1.700" stroke-linecap="round"><circle cx="7" cy="7" r="5.300"></circle><path d="M11 11l4.500 4.500"></path></svg>
<span class="t" style="left: 391.5px; top: 737px; font-size: 14px; color: rgb(90, 90, 90); transform-origin: 0px 0px; transform: scaleX(0.9017);">Search</span>
<svg class="a" style="left:521px;top:730px" width="51" height="28" viewBox="0 0 51 28">
  <defs><clipPath id="pc"><path d="M8 0h29a14 14 0 0 1 0 28h-29c-6 0 -8 -6 -8 -14s2 -14 8 -14z"></path></clipPath></defs>
  <g clip-path="url(#pc)">
    <rect width="51" height="28" fill="#b9aab2"></rect>
    <path d="M0 28l3 -18 8 -10 7 9 5 19z" fill="#cfc4cc"></path>
    <path d="M3 12l7 -11 4 6 -2 6 -4 -3z" fill="#f3f1f4"></path>
    <path d="M0 28l6 -12 4 4 -2 8z" fill="#8f7d80"></path>
    <path d="M10 28c2 -8 6 -15 11 -21l3 2c-3 6 -5 12 -5 19z" fill="#f4f7f9"></path>
    <path d="M24 0h27v28h-12c-2 -10 -8 -16 -15 -20z" fill="#4aa554"></path>
    <path d="M34 0h9l4 10 -9 -1z" fill="#c2b4bc"></path>
    <circle cx="30" cy="7" r="4" fill="#2f8a3f"></circle><circle cx="44" cy="15" r="5" fill="#6cc064"></circle><circle cx="27" cy="13" r="3.500" fill="#57ad52"></circle><circle cx="38" cy="12" r="3" fill="#3a9648"></circle>
    <path d="M20 28l4 -13h9l3 13z" fill="#e09040"></path>
    <path d="M24 28l2 -13M28 28v-13M32 28l-1 -13" stroke="#b4682a" stroke-width="1"></path>
  </g>
</svg>
<!-- task view -->
<svg class="a" style="left:585px;top:732px" width="26" height="24" viewBox="0 0 26 24">
  <defs><linearGradient id="tv" x1="0" y1="0" x2="1" y2="1"><stop offset="0" stop-color="#f6f6f6"></stop><stop offset="1" stop-color="#bdbdbd"></stop></linearGradient></defs>
  <rect x="6" y="1" width="18" height="16" rx="2" fill="url(#tv)"></rect>
  <rect x="1" y="7" width="18" height="16" rx="2" fill="#2b2b2b"></rect>
  <rect x="6" y="7" width="13" height="10" fill="#d8d8d8"></rect>
</svg>
<!-- copilot -->
<svg class="a" style="left:630px;top:733px" width="24" height="21" viewBox="0 0 24 21">
  <defs>
    <linearGradient id="cpL" x1=".3" y1="0" x2=".5" y2="1"><stop offset="0" stop-color="#2386e8"></stop><stop offset=".35" stop-color="#36bfe6"></stop><stop offset=".6" stop-color="#9fd84e"></stop><stop offset=".8" stop-color="#f6c534"></stop><stop offset="1" stop-color="#f2803a"></stop></linearGradient>
    <linearGradient id="cpR" x1=".6" y1="0" x2=".4" y2="1"><stop offset="0" stop-color="#7a62f2"></stop><stop offset=".4" stop-color="#c455d8"></stop><stop offset=".75" stop-color="#ee4f8f"></stop><stop offset="1" stop-color="#f2683f"></stop></linearGradient>
  </defs>
  <path d="M16 20.500h-7.500c-1.500 0 -2.600 -.900 -3 -2.300l-1.200 -4.200h4.200c1.600 0 2.800 -1 3.300 -2.500l2.400 -8c.5 -1.600 1.800 -2.500 3.400 -2.500h2.500c2.500 0 4 2.300 3.300 4.600l-3.500 11.500c-.6 2 -2.200 3.400 -3.900 3.400z" fill="url(#cpR)"></path>
  <path d="M8 .500h7.500c1.500 0 2.600 .900 3 2.300l1.200 4.200h-4.200c-1.600 0 -2.800 1 -3.300 2.500l-2.400 8c-.5 1.600 -1.800 2.500 -3.400 2.500h-2.500c-2.500 0 -4 -2.300 -3.300 -4.600l3.500 -11.500c.6 -2 2.200 -3.400 3.900 -3.400z" fill="url(#cpL)"></path>
</svg>
<!-- teams -->
<svg class="a" style="left:673px;top:733px" width="25" height="22" viewBox="0 0 25 22">
  <circle cx="20.500" cy="5" r="2.800" fill="#5b64d6"></circle>
  <path d="M17 9h7a1 1 0 0 1 1 1v6a4 4 0 0 1 -8 0z" fill="#5b64d6"></path>
  <circle cx="13" cy="3.800" r="3.600" fill="#7b83eb"></circle>
  <path d="M7 9h12a1 1 0 0 1 1 1v6.500a6 6 0 0 1 -12 0z" fill="#7b83eb"></path>
  <rect x="0" y="5" width="12" height="12" rx="1.200" fill="#4b53bc"></rect>
  <path d="M3 8.200h6M6 8.200v6" stroke="#fff" stroke-width="1.600"></path>
</svg>
<!-- file explorer -->
<svg class="a" style="left:717px;top:733px" width="26" height="22" viewBox="0 0 26 22">
  <path d="M1 2.500a1.500 1.500 0 0 1 1.500 -1.500h6l2 2.500h13a1.500 1.500 0 0 1 1.500 1.500v2h-24z" fill="#e9a820"></path>
  <rect x="1" y="4.500" width="24" height="16.500" rx="1.500" fill="#fbd15b"></rect>
  <path d="M1 14h24v5.500a1.500 1.500 0 0 1 -1.500 1.500h-21a1.500 1.500 0 0 1 -1.500 -1.500z" fill="#f6bf3c"></path>
  <path d="M7 15.500a1.500 1.500 0 0 1 1.500 -1.500h9a1.500 1.500 0 0 1 1.500 1.500v5.500h-12z" fill="#2f86da"></path>
  <rect x="7" y="18.500" width="12" height="2.500" fill="#1c69b8"></rect>
</svg>
<!-- edge -->
<svg class="a" style="left:762px;top:731.500px" width="24" height="24" viewBox="0 0 24 24">
  <defs>
    <linearGradient id="ed1" x1="0" y1="0" x2="1" y2="1"><stop offset="0" stop-color="#35c1f1"></stop><stop offset="1" stop-color="#0c59a4"></stop></linearGradient>
    <linearGradient id="ed2" x1="0" y1="0" x2="1" y2="0"><stop offset="0" stop-color="#2fb5e8"></stop><stop offset=".6" stop-color="#55d17a"></stop><stop offset="1" stop-color="#6fdc4c"></stop></linearGradient>
  </defs>
  <circle cx="12" cy="12" r="12" fill="url(#ed1)"></circle>
  <path d="M.3 10a12 12 0 0 1 23.600 1c.3 3.500 -2.500 5.500 -6 5.500c-3 0 -3 -2 -2.300 -3c1 -1.700 .2 -5 -4 -5.500c-5 -.5 -9 2 -11.300 2z" fill="url(#ed2)"></path>
  <path d="M9 10.500c-3 1.500 -3.500 6.500 0 9.800c2.500 2.300 6.500 2.700 9.500 1.200c-4.500 .5 -8 -2 -8.300 -5.500c-.1 -2 .8 -3.700 2.300 -4.500c-1 -.9 -2.300 -1.300 -3.500 -1z" fill="#0f4f96"></path>
  <path d="M10.300 15c.5 3 4 5 8 3.800c2 -.6 3.500 -2 4.200 -3.500c-2 1.500 -5 1.700 -6.700 .5c-1.300 -1 -1.200 -2.500 -.5 -3.300c-2 -1.300 -5.300 0 -5 2.500z" fill="#eaf4fb"></path>
</svg>
<!-- store -->
<svg class="a" style="left:805.500px;top:733px" width="24" height="23" viewBox="0 0 24 23">
  <path d="M7.500 6v-3a2 2 0 0 1 2 -2h5a2 2 0 0 1 2 2v3" fill="none" stroke="#3aa0e8" stroke-width="1.800"></path>
  <path d="M1 5.500h22v14.500a2.500 2.500 0 0 1 -2.500 2.500h-17a2.500 2.500 0 0 1 -2.500 -2.500z" fill="#1d4f8f"></path>
  <rect x="7.500" y="9" width="4.200" height="4.200" fill="#f25022"></rect><rect x="12.500" y="9" width="4.200" height="4.200" fill="#7fba00"></rect>
  <rect x="7.500" y="14" width="4.200" height="4.200" fill="#00a4ef"></rect><rect x="12.500" y="14" width="4.200" height="4.200" fill="#ffb900"></rect>
</svg>
<!-- outlook -->
<svg class="a" style="left:849px;top:733px" width="25" height="22" viewBox="0 0 25 22">
  <path d="M8 4l8.500 -4 8.500 4.500v12.500a2 2 0 0 1 -2 2h-13a2 2 0 0 1 -2 -2z" fill="#1d6fc4"></path>
  <path d="M8 8l17 -3.500v12.500a2 2 0 0 1 -2 2h-15z" fill="#35a6ea"></path>
  <path d="M8 19l17 -9v7a2 2 0 0 1 -2 2z" fill="#5cc4f4"></path>
  <path d="M5 17l18 4.500h-16a2 2 0 0 1 -2 -2z" fill="#1a8fd8"></path>
  <rect x="0" y="5" width="13" height="13" rx="1.300" fill="#0f5fb8"></rect>
  <ellipse cx="6.500" cy="11.500" rx="3.200" ry="3.600" fill="none" stroke="#fff" stroke-width="1.700"></ellipse>
</svg>
<!-- firefox -->
<svg class="a" style="left:893.500px;top:731px" width="24" height="24" viewBox="0 0 24 24">
  <defs>
    <radialGradient id="ff1" cx=".7" cy=".2" r=".9"><stop offset="0" stop-color="#ffe14a"></stop><stop offset=".45" stop-color="#ff8a2a"></stop><stop offset="1" stop-color="#e8333f"></stop></radialGradient>
    <radialGradient id="ff2" cx=".5" cy=".4" r=".6"><stop offset="0" stop-color="#9059f0"></stop><stop offset="1" stop-color="#5b2fb8"></stop></radialGradient>
  </defs>
  <path d="M12 24a11.500 11.500 0 0 1 -10.500 -16c.5 -1.500 1.500 -3 2.500 -3.500c0 1 .3 2 .8 2.500c1 -2 3 -3.500 5.200 -4c1 -1.500 3 -2.800 4 -3c-.5 1.500 0 3 1.500 4.500c3 1 5.500 3.500 7 6.500c1.500 4 .5 8.500 -3 11c-2 1.300 -4.500 2 -7.500 2z" fill="url(#ff1)"></path>
  <circle cx="11.500" cy="12.500" r="5.500" fill="url(#ff2)"></circle>
  <path d="M5 10c2 -2.500 6 -3 8.500 -1c-2 -.3 -3.500 .5 -4 2c-.5 1.500 .5 3 2.500 3.500c2 .5 4 -.5 5 -2c.5 3 -2 6.500 -6 6.500s-7 -4 -6 -9z" fill="#ff9a36"></path>
</svg>
<!-- chrome -->
<svg class="a" style="left:938px;top:731.500px" width="24" height="24" viewBox="0 0 24 24">
  <circle cx="12" cy="12" r="12" fill="#fff"></circle>
  <path d="M12 12l-10.390 -6a12 12 0 0 1 20.780 0z" fill="#e33b2e"></path>
  <path d="M12 12l10.390 -6a12 12 0 0 1 -10.390 18z" fill="#fbc116"></path>
  <path d="M12 12v12a12 12 0 0 1 -10.390 -18z" fill="#2ca24c"></path>
  <path d="M12 6h10.390a12 12 0 0 0 -20.780 0l5.200 9z" fill="#e33b2e"></path>
  <path d="M17.200 15l-5.200 9a12 12 0 0 0 10.390 -18h-10.390z" fill="#fbc116"></path>
  <path d="M6.800 15l-5.190 -9a12 12 0 0 0 10.390 18l5.200 -9z" fill="#2ca24c"></path>
  <circle cx="12" cy="12" r="5.600" fill="#fff"></circle>
  <circle cx="12" cy="12" r="4.500" fill="#3b7ded"></circle>
</svg>
<!-- word -->
<svg class="a" style="left:981.500px;top:733px" width="25" height="22" viewBox="0 0 25 22">
  <path d="M8 0h15.500a1.500 1.500 0 0 1 1.500 1.500v4h-17z" fill="#41a5ee"></path>
  <rect x="8" y="5.500" width="17" height="5.500" fill="#2b7cd3"></rect>
  <rect x="8" y="11" width="17" height="5.500" fill="#185abd"></rect>
  <path d="M8 16.500h17v4a1.500 1.500 0 0 1 -1.500 1.500h-15.500z" fill="#103f91"></path>
  <rect x="0" y="4.500" width="13" height="13" rx="1.300" fill="#185abd"></rect>
  <path d="M2.800 7.800l1.800 6.500 1.900 -6.500 1.900 6.500 1.800 -6.500" fill="none" stroke="#fff" stroke-width="1.400" stroke-linejoin="round"></path>
</svg>
<!-- pdf x active -->
<div class="a" style="left:1019px;top:725px;width:38px;height:38px;border-radius:4px;background:#ecf2f6;border:1px solid #e3eaef"></div>
<svg class="a" style="left:1025px;top:731px" width="26" height="25" viewBox="0 0 26 25">
  <rect width="26" height="25" rx="1" fill="#d8201c"></rect>
  <rect y="16" width="26" height="9" fill="#b0100c"></rect>
  <path d="M13 0h13v16z" fill="#fff"></path>
  <path d="M17.500 0h5l-2.300 3.200zM26 3v8l-3 -4z" fill="#d8201c"></path>
  <text x="3" y="12" font-family="Liberation Sans,sans-serif" font-size="6.500" fill="#f7b9b4">PDF</text>
  <text x="4" y="21" font-family="Liberation Sans,sans-serif" font-size="3.500" fill="#f7b9b4">View &amp; Edit</text>
</svg>
<div class="a" style="left:1030px;top:759.500px;width:16px;height:3px;border-radius:1.500px;background:#2b8c9c"></div>
<!-- running indicators -->
<div class="a" style="left:727px;top:760px;width:6px;height:3px;border-radius:1.500px;background:#8a9096"></div>
<div class="a" style="left:771px;top:760px;width:6px;height:3px;border-radius:1.500px;background:#8a9096"></div>
<div class="a" style="left:902.500px;top:760px;width:6px;height:3px;border-radius:1.500px;background:#8a9096"></div>
<div class="a" style="left:991px;top:760px;width:6px;height:3px;border-radius:1.500px;background:#8a9096"></div>
<!-- tray -->
<svg class="a" style="left:1174px;top:740px" width="12" height="8" viewBox="0 0 12 8" fill="none" stroke="#222" stroke-width="1.500" stroke-linecap="round" stroke-linejoin="round"><path d="M1 6.500l5 -5 5 5"></path></svg>
<svg class="a" style="left:1204px;top:736.500px" width="16" height="13" viewBox="0 0 16 13" fill="none" stroke="#222" stroke-width="1.200" stroke-linecap="round"><path d="M1 4.500a10 10 0 0 1 14 0"></path><path d="M3.300 7a6.700 6.700 0 0 1 9.400 0"></path><path d="M5.600 9.400a3.400 3.400 0 0 1 4.800 0"></path><circle cx="8" cy="11.500" r=".9" fill="#222" stroke="none"></circle></svg>
<svg class="a" style="left:1228px;top:736.500px" width="17" height="14" viewBox="0 0 17 14" fill="none" stroke="#222" stroke-width="1.100" stroke-linecap="round" stroke-linejoin="round"><path d="M1 5h2.500l4 -3.500v11l-4 -3.500h-2.500z"></path><path d="M9.800 5a3 3 0 0 1 0 4"></path><path d="M11.800 3a6 6 0 0 1 0 8"></path><path d="M13.800 1.200a8.500 8.500 0 0 1 0 11.600"></path></svg>
<svg class="a" style="left:1252px;top:739px" width="17" height="10" viewBox="0 0 17 10"><rect x=".600" y=".600" width="13.500" height="8.800" rx="2" fill="none" stroke="#222" stroke-width="1.200"></rect><rect x="2.300" y="2.300" width="10" height="5.400" rx=".8" fill="#222"></rect><path d="M15.500 3.500v3" stroke="#222" stroke-width="1.400" stroke-linecap="round"></path></svg>
<span class="t" style="left: 1319px; top: 731px; font-size: 12px; color: rgb(26, 26, 26); transform-origin: 0px 0px; transform: scaleX(0.9157);">12:44</span>
<span class="t" style="left: 1285.5px; top: 746px; font-size: 12px; color: rgb(26, 26, 26); transform-origin: 0px 0px; transform: scaleX(1.0156);">13/10/2025</span>



</body></html>
